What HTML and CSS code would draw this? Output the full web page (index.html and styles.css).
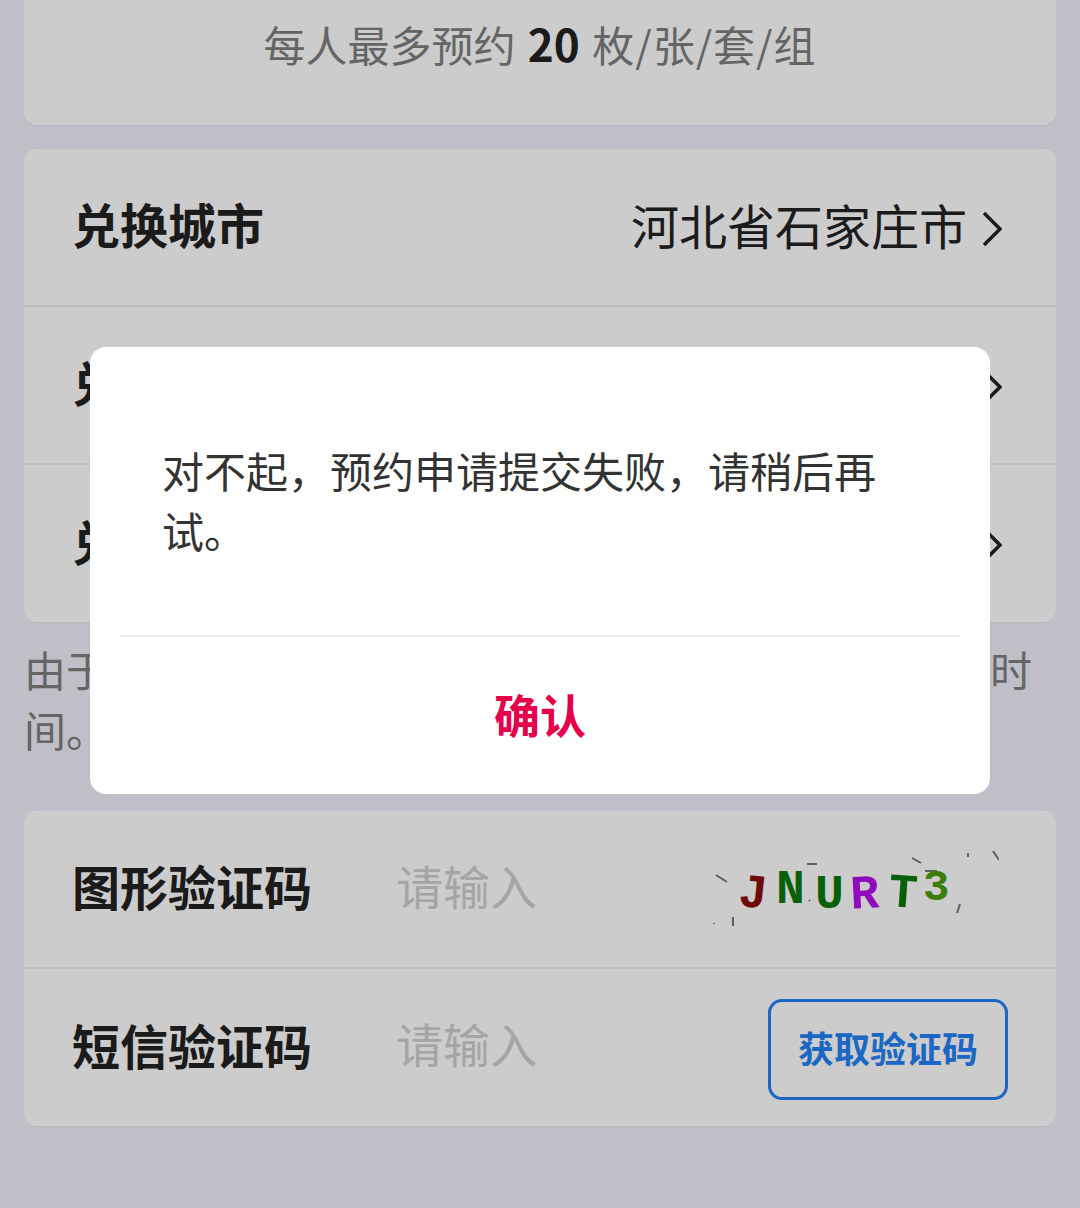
FILE: index.html
```html
<!DOCTYPE html>
<html lang="zh-CN">
<head>
  <meta charset="UTF-8" />
  <meta name="viewport" content="width=device-width, initial-scale=1.0" />
  <title>预约兑换</title>
  <link rel="stylesheet" href="styles.css">
</head>
<body>
  <div class="page">
    <div class="card card-top">
      <p class="limit">每人最多预约 <b>20</b> <span class="limit-unit">枚/张/套/组</span></p>
    </div>

    <div class="card card-form">
      <div class="row">
        <span class="label">兑换城市</span>
        <span class="value"><span class="value-text">河北省石家庄市</span>
          <svg class="chevron" viewBox="0 0 20 36"><path d="M2 2 L18 18 L2 34" /></svg>
        </span>
      </div>
      <div class="row">
        <span class="label">兑换网点</span>
        <span class="value">
          <svg class="chevron" viewBox="0 0 20 36"><path d="M2 2 L18 18 L2 34" /></svg>
        </span>
      </div>
      <div class="row">
        <span class="label">兑换时间</span>
        <span class="value">
          <svg class="chevron" viewBox="0 0 20 36"><path d="M2 2 L18 18 L2 34" /></svg>
        </span>
      </div>
    </div>

    <p class="note">由于各网点预约数量有限，请您提前选择并安排兑换时间。</p>

    <div class="card card-verify">
      <div class="row">
        <span class="label label-code">图形验证码</span>
        <span class="placeholder">请输入</span>
        <svg class="captcha" viewBox="0 9 300 100">
          <g class="noise">
            <path d="M17 45 L28 52" />
            <path d="M108 34 L118 34" />
            <path d="M213 28 L222 33" />
            <path d="M226 41 L238 41" />
            <path d="M269 23 L269 27" />
            <path d="M294 21 L300 30" />
            <path d="M261 74 L258 83" />
            <path d="M34 87 L34 96" />
            <path d="M15 93 L15 94" />
            <path d="M110 70 L111 71" />
          </g>
          <text class="c-dark-red" x="40" y="77" transform="rotate(6 52 60)">J</text>
          <text class="c-green" x="77" y="73">N</text>
          <text class="c-green" x="116" y="78">U</text>
          <text class="c-purple" x="151" y="78" transform="rotate(-3 164 60)">R</text>
          <text class="c-green" x="190" y="77" transform="rotate(4 204 60)">T</text>
          <text class="c-olive c-small" x="224" y="70">3</text>
        </svg>
      </div>
      <div class="row">
        <span class="label label-code">短信验证码</span>
        <span class="placeholder">请输入</span>
        <button class="sms-btn">获取验证码</button>
      </div>
    </div>
  </div>

  <div class="mask"></div>

  <div class="dialog">
    <p class="dialog-text">对不起，预约申请提交失败，请稍后再试。</p>
    <div class="dialog-btn">确认</div>
  </div>
</body>
</html>
```

FILE: styles.css
```css
html, body {
  margin: 0;
  height: 1208px;
  overflow: hidden;
}
body {
  font-family: "Noto Sans CJK SC", "Noto Sans", sans-serif;
  background-color: #f1eff9;
  color: #222;
}
.page {
  padding: 0 24px;
}
.card {
  background-color: #fff;
  border-radius: 12px;
  box-shadow: 0 1px 2px rgba(0, 0, 0, 0.06);
}
.card-top {
  height: 125px;
  border-radius: 0 0 12px 12px;
  display: flex;
  justify-content: center;
}
.limit {
  margin: 13px 0 0;
  height: 60px;
  line-height: 60px;
  font-size: 42px;
  word-spacing: 3px;
  color: #7f7f7f;
}
.limit b {
  font-size: 44px;
  color: #222;
}
.limit-unit {
  letter-spacing: 1px;
}
.card-form {
  margin-top: 24px;
}
.row {
  height: 156px;
  padding: 0 54px 0 48px;
  display: flex;
  align-items: center;
  border-bottom: 2px solid #ebebeb;
}
.row:last-child {
  height: 157px;
  border-bottom: 0;
}
.label {
  padding-bottom: 8px;
  font-size: 48px;
  font-weight: 700;
}
.label-code {
  width: 324px;
}
.value {
  margin-left: auto;
  font-size: 48px;
  display: flex;
  align-items: center;
  gap: 15px;
}
.value-text {
  padding-bottom: 6px;
}
.chevron {
  margin-top: 3px;
  width: 20px;
  height: 36px;
  fill: none;
  stroke: #222;
  stroke-width: 3.5;
}
.note {
  margin: 17px 0 52px;
  font-size: 42px;
  line-height: 60px;
  color: #7f7f7f;
}
.placeholder {
  padding-bottom: 10px;
  font-size: 47px;
  color: #cfcfcf;
}
.captcha {
  margin-left: auto;
  margin-right: 3px;
  width: 300px;
  height: 100px;
}
.captcha text {
  font-family: "Liberation Mono", monospace;
  font-size: 48px;
  font-weight: 700;
}
.captcha .c-small {
  font-size: 44px;
}
.noise path {
  fill: none;
  stroke: #777;
  stroke-width: 2;
}
.c-dark-red { fill: #8a0f0f; }
.c-green { fill: #0a7a0a; }
.c-purple { fill: #b30eea; }
.c-olive { fill: #4a9e0a; }
.sms-btn {
  margin-left: auto;
  margin-right: -6px;
  margin-top: 4px;
  width: 240px;
  height: 101px;
  box-sizing: border-box;
  background: transparent;
  border: 3px solid #2380f5;
  border-radius: 14px;
  color: #2380f5;
  font-family: inherit;
  font-size: 36px;
  font-weight: 700;
  padding: 0 0 6px;
}
.mask {
  position: fixed;
  inset: 0;
  background-color: rgba(0, 0, 0, 0.2);
}
.dialog {
  position: fixed;
  left: 90px;
  top: 347px;
  width: 900px;
  height: 447px;
  box-sizing: border-box;
  padding: 0 30px;
  background-color: #fff;
  border-radius: 16px;
}
.dialog-text {
  margin: 0;
  height: 290px;
  box-sizing: border-box;
  padding: 93px 42px 0;
  font-size: 42px;
  line-height: 60px;
  color: #333;
  border-bottom: 2px solid #ebebeb;
}
.dialog-btn {
  text-align: center;
  margin-top: 43px;
  font-size: 46px;
  line-height: 66px;
  font-weight: 700;
  color: #e6004c;
}
```
